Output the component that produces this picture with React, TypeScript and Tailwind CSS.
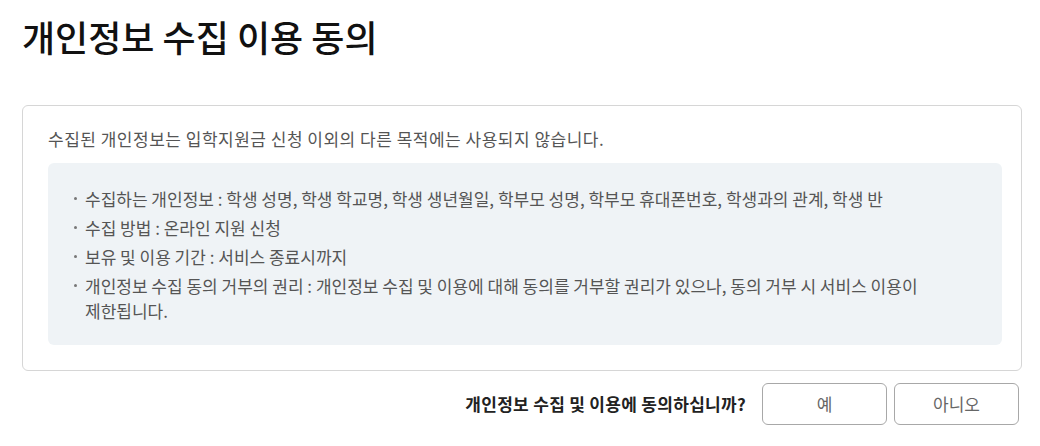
import React from 'react'

const items: { label: string; value: string }[] = [
  {
    label: '수집하는 개인정보',
    value: '학생 성명, 학생 학교명, 학생 생년월일, 학부모 성명, 학부모 휴대폰번호, 학생과의 관계, 학생 반',
  },
  { label: '수집 방법', value: '온라인 지원 신청' },
  { label: '보유 및 이용 기간', value: '서비스 종료시까지' },
  {
    label: '개인정보 수집 동의 거부의 권리',
    value: '개인정보 수집 및 이용에 대해 동의를 거부할 권리가 있으나, 동의 거부 시 서비스 이용이 제한됩니다.',
  },
]

export default function App() {
  return (
    <main
      className="pl-[22px] pr-[18px] pt-[14px] bg-white min-h-[446px]"
      style={{ fontFamily: '"Noto Sans CJK KR", "Noto Sans", sans-serif' }}
    >
      <h1 className="text-[36px] leading-[44px] font-medium text-[#111]">
        개인정보 수집 이용 동의
      </h1>

      {/* 안내 박스 */}
      <section className="mt-[47px] border border-[#d6d6d6] rounded-md pl-[25px] pr-[19px] pt-[20px] pb-[25px]">
        <p className="text-[17px] leading-[26px] tracking-[0.5px] text-[#555]">
          수집된 개인정보는 입학지원금 신청 이외의 다른 목적에는 사용되지 않습니다.
        </p>
        <ul className="mt-[11px] bg-[#eff3f6] rounded-md pl-[26px] pr-[30px] pt-[23px] pb-[22px] space-y-[4px]">
          {items.map(it => (
            <li key={it.label} className="flex text-[17px] leading-[25px] text-[#555]">
              <span className="w-[11px] shrink-0 flex h-[25px] items-center">
                <span className="block w-[3px] h-[3px] rounded-full bg-[#777]" />
              </span>
              <span className="pr-[20px] break-keep">{`${it.label} : ${it.value}`}</span>
            </li>
          ))}
        </ul>
      </section>

      {/* 동의 여부 */}
      <div className="mt-[12px] mr-[3px] flex items-center justify-end gap-[7px]">
        <span className="mr-[9px] text-[17px] tracking-[0.3px] font-bold text-[#222]">
          개인정보 수집 및 이용에 동의하십니까?
        </span>
        <button className="w-[125px] h-[42px] rounded-md border border-[#a8a8a8] text-[17px] text-[#666] bg-white">
          예
        </button>
        <button className="w-[125px] h-[42px] rounded-md border border-[#a8a8a8] text-[17px] text-[#666] bg-white">
          아니오
        </button>
      </div>
    </main>
  )
}
